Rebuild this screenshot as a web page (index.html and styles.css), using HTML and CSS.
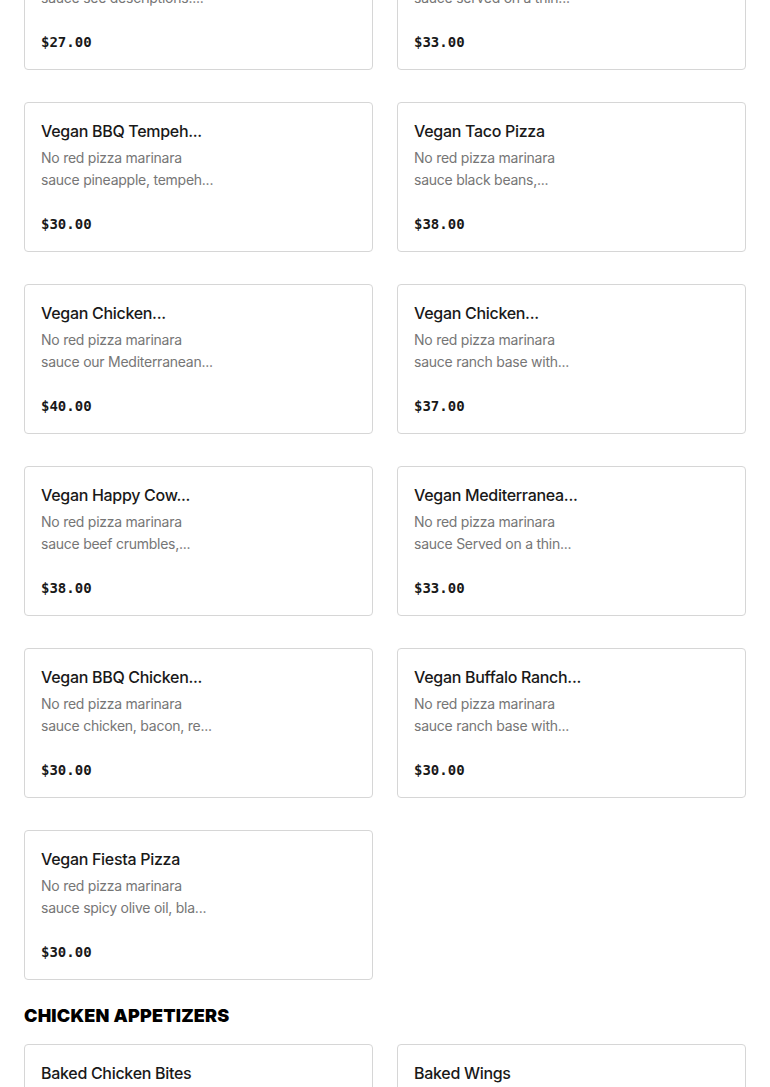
FILE: index.html
```html
<!DOCTYPE html>
<html>
<head>
<meta charset="utf-8">
<link rel="stylesheet" href="styles.css">
</head>
<body>
<main class="menu">
  <section class="grid">
    <article class="card"><div class="info"><h3 class="title">Vegan Supreme Pizza</h3><p class="desc">No red pizza marinara<br>sauce see descriptions....</p></div><div class="price">$27.00</div></article>
    <article class="card"><div class="info"><h3 class="title">Vegan Margherita...</h3><p class="desc">No red pizza marinara<br>sauce served on a thin...</p></div><div class="price">$33.00</div></article>
    <article class="card"><div class="info"><h3 class="title">Vegan BBQ Tempeh...</h3><p class="desc">No red pizza marinara<br>sauce pineapple, tempeh...</p></div><div class="price">$30.00</div></article>
    <article class="card"><div class="info"><h3 class="title">Vegan Taco Pizza</h3><p class="desc">No red pizza marinara<br>sauce black beans,...</p></div><div class="price">$38.00</div></article>
    <article class="card"><div class="info"><h3 class="title">Vegan Chicken...</h3><p class="desc">No red pizza marinara<br>sauce our Mediterranean...</p></div><div class="price">$40.00</div></article>
    <article class="card"><div class="info"><h3 class="title">Vegan Chicken...</h3><p class="desc">No red pizza marinara<br>sauce ranch base with...</p></div><div class="price">$37.00</div></article>
    <article class="card"><div class="info"><h3 class="title">Vegan Happy Cow...</h3><p class="desc">No red pizza marinara<br>sauce beef crumbles,...</p></div><div class="price">$38.00</div></article>
    <article class="card"><div class="info"><h3 class="title">Vegan Mediterranea...</h3><p class="desc">No red pizza marinara<br>sauce Served on a thin...</p></div><div class="price">$33.00</div></article>
    <article class="card"><div class="info"><h3 class="title">Vegan BBQ Chicken...</h3><p class="desc">No red pizza marinara<br>sauce chicken, bacon, re...</p></div><div class="price">$30.00</div></article>
    <article class="card"><div class="info"><h3 class="title">Vegan Buffalo Ranch...</h3><p class="desc">No red pizza marinara<br>sauce ranch base with...</p></div><div class="price">$30.00</div></article>
    <article class="card"><div class="info"><h3 class="title">Vegan Fiesta Pizza</h3><p class="desc">No red pizza marinara<br>sauce spicy olive oil, bla...</p></div><div class="price">$30.00</div></article>
  </section>
  <h2 class="section-title">CHICKEN APPETIZERS</h2>
  <section class="grid">
    <article class="card"><div class="info"><h3 class="title">Baked Chicken Bites</h3><p class="desc">Crispy baked chicken<br>bites served with...</p></div><div class="price">$12.00</div></article>
    <article class="card"><div class="info"><h3 class="title">Baked Wings</h3><p class="desc">Oven baked wings<br>tossed in your choice...</p></div><div class="price">$14.00</div></article>
  </section>
</main>
</body>
</html>
```

FILE: styles.css
```css
html, body {
  margin: 0;
  padding: 0;
  background: #ffffff;
}
body {
  font-family: "Inter", "Liberation Sans", sans-serif;
  color: #191919;
}
.menu {
  padding: 0 24px;
  margin-top: -80px;
}
.grid {
  display: grid;
  grid-template-columns: 1fr 1fr;
  column-gap: 24px;
  row-gap: 32px;
}
.card {
  border: 1px solid #d6d6d6;
  border-radius: 4px;
  padding: 16px;
  display: flex;
  flex-direction: column;
  height: 150px;
  box-sizing: border-box;
}
.info {
  width: 180px;
}
.title {
  margin: 0;
  font-size: 16px;
  line-height: 24px;
  font-weight: 500;
  letter-spacing: -0.3px;
  white-space: nowrap;
  color: #191919;
}
.desc {
  margin: 4px 0 0;
  font-size: 14px;
  line-height: 22px;
  letter-spacing: -0.25px;
  color: #767676;
  white-space: nowrap;
}
.price {
  margin-top: 23px;
  font-family: "DejaVu Sans Mono", "Liberation Mono", monospace;
  font-weight: bold;
  font-size: 14px;
  line-height: 20px;
  color: #191919;
}
.section-title {
  margin: 0;
  padding: 24px 0 16px;
  font-size: 18px;
  line-height: 24px;
  font-weight: 900;
  letter-spacing: 0.2px;
  color: #000;
}
```
